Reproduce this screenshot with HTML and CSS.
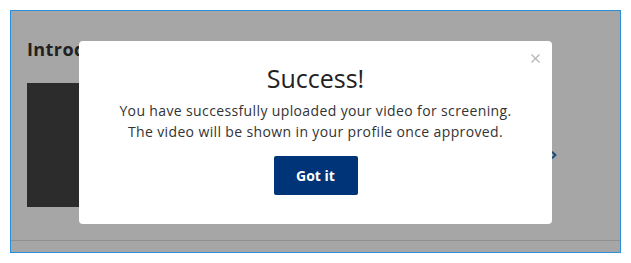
FILE: index.html
```html
<!DOCTYPE html>
<html lang="en">
<head>
    <meta charset="UTF-8">
    <title>Upload complete</title>
    <link rel="stylesheet" href="styles.css">
</head>
<body>
<div class="frame">
    <div class="page">
        <h2 class="section-title">Introduction</h2>
        <div class="video-row">
            <div class="thumb"></div>
            <span class="chevron">
                <svg width="6" height="8" viewBox="0 0 6 8"><path d="M1 0.8L4.4 4L1 7.2" stroke="#2a78bb" stroke-width="2" fill="none"/></svg>
            </span>
        </div>
    </div>
    <div class="overlay"></div>
    <div class="modal">
        <span class="close">
            <svg width="9" height="9" viewBox="0 0 9 9"><path d="M0.5 0.5L8.5 8.5M8.5 0.5L0.5 8.5" stroke="#b5b5b5" stroke-width="1.2" fill="none"/></svg>
        </span>
        <h1 class="modal-title">Success!</h1>
        <p class="modal-text">You have successfully uploaded your video for screening.<br>The video will be shown in your profile once approved.</p>
        <button class="btn">Got it</button>
    </div>
</div>
</body>
</html>
```

FILE: styles.css
```css
*{
    margin:0;
    padding:0;
    box-sizing:border-box;
}
body{
    background:#fff;
    font-family:"Open Sans","DejaVu Sans",sans-serif;
}
.frame{
    width:611px;
    height:243px;
    margin:10px;
    border:1px solid #2a8fd8;
    position:relative;
    overflow:hidden;
}
.page{
    height:230px;
    padding:26px 15px 0 16px;
    border-bottom:1px solid #ddd;
    background:#fff;
}
.section-title{
    font-size:18px;
    line-height:24px;
    font-weight:700;
    letter-spacing:0.4px;
    color:#333;
}
.video-row{
    display:flex;
    align-items:flex-start;
    margin-top:22px;
}
.thumb{
    width:250px;
    height:124px;
    background:#444;
}
.chevron{
    margin-left:auto;
    margin-right:48px;
    margin-top:68px;
    line-height:0;
}
.overlay{
    position:absolute;
    top:0;
    left:0;
    right:0;
    bottom:0;
    background:rgba(0,0,0,0.35);
}
.modal{
    position:absolute;
    left:68px;
    top:30px;
    width:473px;
    height:183px;
    background:#fff;
    border-radius:4px;
    padding-top:22px;
    text-align:center;
    color:#333;
}
.close{
    position:absolute;
    left:452px;
    top:13px;
    line-height:0;
}
.modal-title{
    font-size:25px;
    line-height:30px;
    font-weight:400;
    color:#222;
}
.modal-text{
    margin-top:7px;
    font-size:14px;
    line-height:21px;
    letter-spacing:0.37px;
}
.btn{
    margin-top:14px;
    width:84px;
    height:39px;
    background:#003478;
    border:0;
    border-radius:2px;
    color:#fff;
    font-family:inherit;
    font-size:14px;
    font-weight:700;
}
```
